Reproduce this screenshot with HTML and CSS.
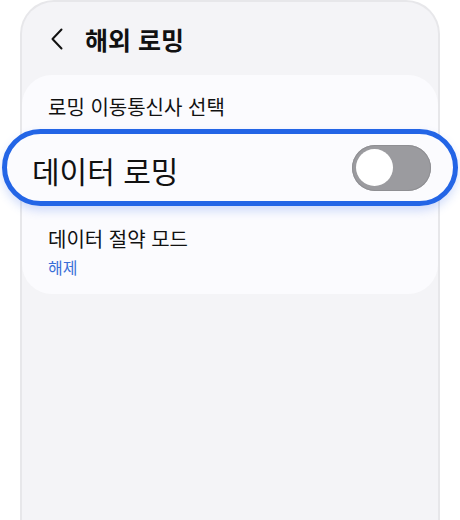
FILE: index.html
```html
<!DOCTYPE html>
<html lang="ko">
<head>
<meta charset="utf-8">
<link rel="stylesheet" href="styles.css">
</head>
<body>
<div class="phone">
  <div class="header">
    <svg class="back" width="14" height="22" viewBox="0 0 14 22"><path d="M11.5 1.5 L2.5 11 L11.5 20.5" fill="none" stroke="#111" stroke-width="2" stroke-linecap="round" stroke-linejoin="round"/></svg>
    <h1 class="title">해외 로밍</h1>
  </div>
  <div class="card">
    <div class="row first">로밍 이동통신사 선택</div>
    <div class="pill">
      <span class="pill-label">데이터 로밍</span>
      <span class="toggle"><span class="knob"></span></span>
    </div>
    <div class="row last">
      <div class="row-title">데이터 절약 모드</div>
      <div class="row-sub">해제</div>
    </div>
  </div>
</div>
</body>
</html>
```
FILE: styles.css
```css
html, body {
  margin: 0;
  padding: 0;
  background: #ffffff;
  overflow: hidden;
  height: 520px;
}
body {
  font-family: "Noto Sans CJK KR", "Noto Sans", sans-serif;
  color: #111111;
}
.phone {
  margin-left: 20px;
  width: 416px;
  height: 518px;
  border: 2px solid #e7e7ea;
  border-bottom: none;
  border-radius: 34px 34px 0 0;
  background: #f4f4f7;
}
.header {
  display: flex;
  align-items: center;
  height: 73px;
  padding-left: 28px;
  gap: 21px;
}
.back {
  display: block;
  flex: none;
}
.title {
  margin: 0;
  font-size: 25px;
  font-weight: 700;
  line-height: 30px;
}
.card {
  background: #fbfbfe;
  border-radius: 30px;
}
.row {
  padding-left: 26px;
  box-sizing: border-box;
}
.first {
  height: 54px;
  padding-top: 19px;
  font-size: 20px;
  line-height: 26px;
}
.pill {
  margin: 0 -20px;
  height: 77px;
  box-sizing: border-box;
  border: 5px solid #2365e6;
  border-radius: 40px;
  background: #fbfbfe;
  display: flex;
  align-items: center;
  justify-content: space-between;
  padding: 0 22px 0 25px;
  box-shadow: 0 5px 10px rgba(60, 110, 235, 0.22);
  position: relative;
}
.pill-label {
  font-size: 30px;
  line-height: 36px;
  padding-top: 4px;
}
.toggle {
  width: 79px;
  height: 46px;
  border-radius: 23px;
  background: #9b9b9f;
  box-shadow: inset 0 0 0 1px #8f8f93;
  display: flex;
  align-items: center;
  padding-left: 4px;
  box-sizing: border-box;
}
.knob {
  width: 37px;
  height: 37px;
  border-radius: 50%;
  background: #ffffff;
}
.last {
  padding-top: 20px;
  padding-bottom: 16px;
}
.row-title {
  font-size: 20px;
  line-height: 26px;
}
.row-sub {
  margin-top: 4px;
  font-size: 16px;
  line-height: 22px;
  color: #3a6fd8;
}
```
